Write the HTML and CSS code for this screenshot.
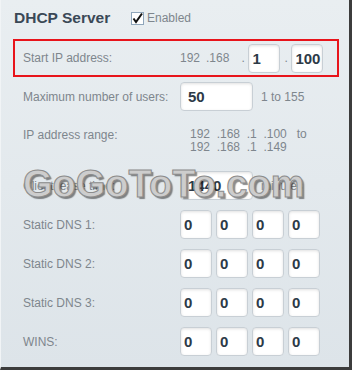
FILE: index.html
```html
<!DOCTYPE html>
<html lang="en">
<head>
    <meta charset="UTF-8">
    <title>DHCP Server</title>
    <link rel="stylesheet" href="styles.css">
</head>
<body>

    <div class="panel">
        <div class="title-row">
            <h2>DHCP Server</h2>
            <label class="check">
                <svg width="13" height="13" viewBox="0 0 13 13">
                    <rect x="0.5" y="0.5" width="12" height="12" fill="#fff" stroke="#8fa6bb"/>
                    <path d="M2.5 6.5 L5 10 L11 1.5" fill="none" stroke="#111" stroke-width="2"/>
                </svg>
                Enabled
            </label>
        </div>

        <!-- highlighted row -->
        <div class="row start-row">
            <span class="label">Start IP address:</span>
            <div class="field">
                <span class="octet">192</span>
                <span class="octet last">.168</span>
                <span class="dot">.</span>
                <input class="box" value="1">
                <span class="dot after">.</span>
                <input class="box" value="100">
            </div>
        </div>

        <div class="row">
            <span class="label">Maximum number of users:</span>
            <div class="field">
                <input class="box wide" value="50">
                <span class="hint">1 to 155</span>
            </div>
        </div>

        <div class="row range-row">
            <span class="label">IP address range:</span>
            <div class="range">
                <div>192 &nbsp;.168 &nbsp;.1 &nbsp;.100 &nbsp;&nbsp;to</div>
                <div>192 &nbsp;.168 &nbsp;.1 &nbsp;.149</div>
            </div>
        </div>

        <div class="row">
            <span class="label">Client lease time:</span>
            <div class="field">
                <input class="box wide" value="1440">
                <span class="hint">minutes</span>
            </div>
        </div>

        <div class="row">
            <span class="label">Static DNS 1:</span>
            <div class="field quad">
                <input class="box" value="0"><input class="box" value="0"><input class="box" value="0"><input class="box" value="0">
            </div>
        </div>

        <div class="row">
            <span class="label">Static DNS 2:</span>
            <div class="field quad">
                <input class="box" value="0"><input class="box" value="0"><input class="box" value="0"><input class="box" value="0">
            </div>
        </div>

        <div class="row">
            <span class="label">Static DNS 3:</span>
            <div class="field quad">
                <input class="box" value="0"><input class="box" value="0"><input class="box" value="0"><input class="box" value="0">
            </div>
        </div>

        <div class="row">
            <span class="label">WINS:</span>
            <div class="field quad">
                <input class="box" value="0"><input class="box" value="0"><input class="box" value="0"><input class="box" value="0">
            </div>
        </div>

        <div class="watermark">GoGoToTo.com</div>
    </div>

</body>
</html>
```

FILE: styles.css
```css
body {
    margin: 0;
    background: #ffffff;
    font-family: 'Liberation Sans', Arial, sans-serif;
}

.panel {
    position: relative;
    width: 352px;
    height: 370px;
    box-sizing: border-box;
    padding: 0 0 0 12px;
    background: linear-gradient(to bottom, #e9eef1, #dde4e9);
    border-left: 1px solid #f1f4f6;
    border-right: 3px solid #3c3c3c;
    border-bottom: 3px solid #3c3c3c;
    overflow: hidden;
}

.title-row {
    display: flex;
    align-items: center;
    height: 36px;
}

h2 {
    margin: 0 0 0 1px;
    font-size: 15.5px;
    color: #3a4856;
    width: 117px;
}

.check {
    display: flex;
    align-items: center;
    gap: 3px;
    font-size: 12px;
    color: #7e868d;
}

.row {
    display: flex;
    align-items: center;
    height: 39px;
    font-size: 12px;
    color: #7e868d;
    white-space: nowrap;
}

.label {
    width: 167px;
    padding-left: 10px;
    box-sizing: border-box;
    flex-shrink: 0;
}

.start-row {
    margin-top: 3px;
    width: 326px;
    height: 38px;
    box-sizing: border-box;
    border: 2px solid #e8141b;
}

.start-row .label {
    width: 165px;
    padding-left: 8px;
}

.field {
    display: flex;
    align-items: center;
}

.octet {
    margin-right: 6px;
}

.octet.last {
    margin-right: 12px;
}

.dot {
    width: 7px;
}

.dot.after {
    margin-left: 4px;
}

.box {
    width: 32px;
    height: 29px;
    box-sizing: border-box;
    border: 1px solid #c8cfd5;
    border-radius: 4px;
    background: #ffffff;
    box-shadow: inset 0 1px 3px rgba(0, 0, 0, 0.12);
    padding: 0 0 0 3px;
    margin: 0;
    font-family: 'Liberation Sans', Arial, sans-serif;
    font-weight: bold;
    font-size: 15px;
    color: #2d3a47;
    outline: none;
}

.wide {
    width: 73px;
    padding-left: 7px;
}

.hint {
    margin-left: 8px;
}

.quad {
    gap: 4px;
}

.range-row {
    height: 50px;
    align-items: flex-start;
    padding-top: 12px;
    box-sizing: border-box;
}

.range {
    margin-left: 10px;
    line-height: 13px;
}

/* watermark over the content */
.watermark {
    position: absolute;
    left: 22px;
    top: 163px;
    font-size: 38px;
    font-weight: bold;
    color: #cdcdcd;
    -webkit-text-stroke: 1px #8c8c8c;
    text-shadow: 2px 2px 1px rgba(0, 0, 0, 0.45);
    pointer-events: none;
}
```
